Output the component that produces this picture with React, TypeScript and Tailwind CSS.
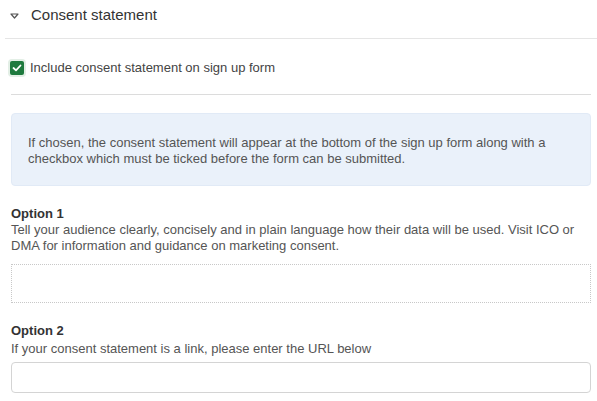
export default function App() {
  return (
    <div className="w-[597px] h-[401px] bg-white overflow-hidden font-['Liberation_Sans',Arial,sans-serif] text-[#555]">
      {/* Section header */}
      <div className="flex items-center h-[39px] ml-[5px] pb-[7px] border-b border-[#e5e5e5]">
        <svg width="9" height="6" viewBox="0 0 9 6" className="ml-[5px] mt-[1px]">
          <path d="M1 1 L8 1 L4.5 5 Z" fill="none" stroke="#555" strokeWidth="1.2" strokeLinejoin="round" />
        </svg>
        <span className="ml-[12px] text-[15px] text-[#333]">Consent statement</span>
      </div>

      <div className="px-[11px] pr-[6px]">
        {/* Checkbox row */}
        <div className="flex items-center h-[56px] pt-[2px] border-b border-[#dcdcdc]">
          <span className="w-[14px] h-[14px] rounded-[2px] bg-[#1e7a3e] flex items-center justify-center -ml-[1px] ring-2 ring-[#e3efe6]">
            <svg width="10" height="8" viewBox="0 0 10 8">
              <path d="M1.5 4 L4 6.3 L8.5 1.5" fill="none" stroke="#fff" strokeWidth="1.8" strokeLinecap="round" strokeLinejoin="round" />
            </svg>
          </span>
          <span className="ml-[6px] text-[13px] text-[#444]">Include consent statement on sign up form</span>
        </div>

        {/* Info box */}
        <div className="mt-[18px] h-[73px] rounded-[4px] bg-[#eaf1fa] border border-[#e1eaf6] px-[16px] flex items-center">
          <p className="text-[13px] leading-[16px] text-[#555] pt-[2px]">
            If chosen, the consent statement will appear at the bottom of the sign up form along with a checkbox which must be ticked before the form can be submitted.
          </p>
        </div>

        {/* Option 1 */}
        <div className="mt-[20px]">
          <div className="text-[13px] font-bold text-[#333] leading-[16px]">Option 1</div>
          <p className="text-[13px] leading-[16px] text-[#555] pr-[10px]">
            Tell your audience clearly, concisely and in plain language how their data will be used. Visit ICO or DMA for information and guidance on marketing consent.
          </p>
          <div className="mt-[10px] h-[39px] border border-dotted border-[#c8c8c8]" />
        </div>

        {/* Option 2 */}
        <div className="mt-[20px]">
          <div className="text-[13px] font-bold text-[#333] leading-[16px]">Option 2</div>
          <p className="text-[13px] leading-[16px] text-[#555] mt-[2px]">
            If your consent statement is a link, please enter the URL below
          </p>
          <input
            type="text"
            className="mt-[5px] block w-full h-[31px] rounded-[4px] border border-[#d4d4d4] bg-white outline-none"
          />
        </div>
      </div>
    </div>
  );
}
